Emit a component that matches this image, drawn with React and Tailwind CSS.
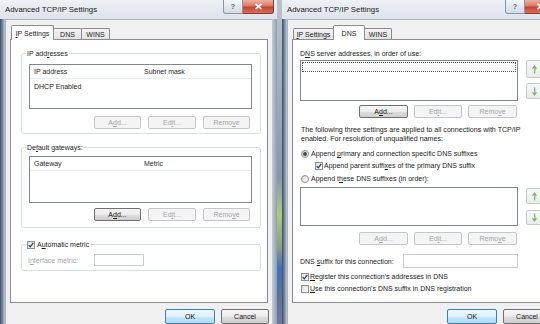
import React from "react";

const FONT = "font-['Liberation_Sans',Arial,sans-serif]";

function U({ children }) {
  return <span className="underline underline-offset-[1px] decoration-[0.7px]">{children}</span>;
}

function Btn({ w, h = "h-[13px]", kind = "disabled", children }) {
  const styles = {
    disabled: "border-[#c3c7cb] bg-[#f4f4f4] text-[#a6a6a6]",
    enabled:
      "border-[#707070] bg-[linear-gradient(to_bottom,#f6f6f6_0%,#ebebeb_50%,#dddddd_51%,#cfcfcf_100%)] text-[#111]",
    default:
      "border-[#3c7fb1] bg-[linear-gradient(to_bottom,#eef7fd_0%,#dcf0fb_50%,#c5e6f8_51%,#b2dbf2_100%)] text-[#111]",
  };
  return (
    <div
      className={`${w} ${h} shrink-0 flex items-center justify-center rounded-[2px] border text-[7px] leading-none ${styles[kind]}`}
    >
      <span>{children}</span>
    </div>
  );
}

function Check({ checked }) {
  return (
    <div className="w-[8px] h-[8px] shrink-0 border border-[#8e8f8f] bg-[linear-gradient(135deg,#dcdcdc,#ffffff)] flex items-center justify-center">
      {checked && (
        <svg width="6" height="6" viewBox="0 0 6 6">
          <path d="M0.7 3.1 L2.3 4.8 L5.3 0.9" stroke="#24365a" strokeWidth="1.2" fill="none" />
        </svg>
      )}
    </div>
  );
}

function Radio({ checked }) {
  return (
    <div className="w-[8px] h-[8px] shrink-0 rounded-full border border-[#8e8f8f] bg-[linear-gradient(135deg,#dcdcdc,#ffffff)] flex items-center justify-center">
      {checked && <div className="w-[4px] h-[4px] rounded-full bg-[#3d4a58]" />}
    </div>
  );
}

function ArrowBtn({ up, h }) {
  return (
    <div
      className={`w-[16px] ${h} shrink-0 rounded-[2px] border border-[#c3c9cf] bg-[linear-gradient(to_bottom,#f7f8f8,#e8ebec)] flex items-center justify-center`}
    >
      <svg width="7" height="9" viewBox="0 0 7 9">
        {up ? (
          <path d="M3.5 8.5 C3.5 6 4.5 4.5 3.5 2 M1.5 3.8 L3.5 1 L5.5 3.8" stroke="#7bb565" strokeWidth="1.2" fill="none" />
        ) : (
          <path d="M3.5 0.5 C3.5 3 4.5 4.5 3.5 7 M1.5 5.2 L3.5 8 L5.5 5.2" stroke="#7bb565" strokeWidth="1.2" fill="none" />
        )}
      </svg>
    </div>
  );
}

function Group({ label, className, children }) {
  return (
    <div className={`relative border border-[#d5dfe5] rounded-[3px] ${className}`}>
      <div className="absolute -top-[5px] left-[4px] bg-white px-[1px] leading-[9px] flex items-center gap-[2px]">
        {label}
      </div>
      {children}
    </div>
  );
}

function ListBox({ h, cols, rows }) {
  return (
    <div className={`w-[223px] ${h} border border-[#828790] bg-white`}>
      <div className="h-[14px] flex items-center border-b border-[#e8ecef] text-[#2a2a2a]">
        <div className="w-[110px] pl-[4px]">{cols[0]}</div>
        <div className="pl-[4px]">{cols[1]}</div>
      </div>
      {rows.map((r, i) => (
        <div key={i} className="h-[14px] flex items-center">
          <div className="w-[110px] pl-[4px]">{r[0]}</div>
          <div className="pl-[4px]">{r[1]}</div>
        </div>
      ))}
    </div>
  );
}

function TitleBar() {
  return (
    <div className="h-[19px] shrink-0 flex items-start bg-[linear-gradient(to_bottom,#eef1f5,#dde3ea)]">
      <div className="flex-1 pl-[5px] pt-[5px] text-[7.8px] leading-[9px] text-[#1a1a1a] whitespace-nowrap">
        Advanced TCP/IP Settings
      </div>
      <div className="w-[20px] h-[14px] shrink-0 border border-t-0 border-[#8795a8] rounded-bl-[3px] bg-[linear-gradient(to_bottom,#f4f7fa,#d3dbe5)] flex items-center justify-center text-[7px] leading-none font-bold text-[#56657a]">
        ?
      </div>
      <div className="w-[31px] h-[14px] shrink-0 mr-[3px] border border-t-0 border-l-0 border-[#8a3a2e] rounded-br-[3px] bg-[linear-gradient(to_bottom,#eeb0a2_0%,#d97a66_45%,#c5432f_55%,#d7705a_100%)] flex items-center justify-center">
        <svg width="9" height="7" viewBox="0 0 9 7">
          <path d="M1.5 0.8 L7.5 6.2 M7.5 0.8 L1.5 6.2" stroke="#ffffff" strokeWidth="1.7" />
        </svg>
      </div>
    </div>
  );
}

function Tabs({ items }) {
  return (
    <div className="h-[14px] shrink-0 flex items-end pl-[1px]">
      {items.map((t, i) =>
        t.sel ? (
          <div
            key={i}
            className={`relative z-10 -mb-px h-[15px] ${t.w} ${i > 0 ? "-ml-px" : ""} border border-b-0 border-[#898c95] rounded-t-[2px] bg-white flex items-center justify-center`}
          >
            {t.label}
          </div>
        ) : (
          <div
            key={i}
            className={`h-[11px] ${t.w} ${i > 0 ? "-ml-px" : ""} border border-b-0 border-[#898c95] rounded-t-[2px] bg-[linear-gradient(to_bottom,#f4f4f4,#e2e2e2)] flex items-center justify-center`}
          >
            {t.label}
          </div>
        )
      )}
    </div>
  );
}

function Window({ tabs, children }) {
  return (
    <div className="w-[277px] h-[324px] shrink-0 flex flex-col">
      <TitleBar />
      <div className="flex flex-1 min-h-0">
        <div className="w-[5px] shrink-0 bg-[linear-gradient(to_right,#3f4e66,#7d8ea6_55%,#c3ccd7)]" />
        <div className="w-[267px] shrink-0 bg-[#f0f0f0] flex flex-col pt-[5px] px-[4px] border-l border-t border-[#aab4c0]">
          <Tabs items={tabs} />
          <div className="h-[264px] shrink-0 border border-[#898c95] bg-white">{children}</div>
          <div className="mt-[6px] flex justify-end gap-[6px] -mr-[1px]">
            <Btn w="w-[50px]" h="h-[15px]" kind="default">OK</Btn>
            <Btn w="w-[48px]" h="h-[15px]" kind="enabled">Cancel</Btn>
          </div>
        </div>
        <div className="w-[5px] shrink-0 bg-[linear-gradient(to_right,#c3ccd7,#8f9db0)]" />
      </div>
    </div>
  );
}

function LeftPanel() {
  return (
    <div className="pl-[10px] pt-[13px] flex flex-col">
      <Group className="w-[240px] h-[81px] pt-[10px] pl-[7px]" label={<span>IP add<U>r</U>esses</span>}>
        <ListBox h="h-[45px]" cols={["IP address", "Subnet mask"]} rows={[["DHCP Enabled", ""]]} />
        <div className="mt-[7px] w-[223px] flex justify-end gap-[7px] pr-[2px]">
          <Btn w="w-[47px]">A<U>d</U>d...</Btn>
          <Btn w="w-[48px]">Ed<U>i</U>t...</Btn>
          <Btn w="w-[47px]">Remo<U>v</U>e</Btn>
        </div>
      </Group>
      <Group className="mt-[13px] w-[240px] h-[81px] pt-[8px] pl-[7px]" label={<span>De<U>f</U>ault gateways:</span>}>
        <ListBox h="h-[47px]" cols={["Gateway", "Metric"]} rows={[]} />
        <div className="mt-[5px] w-[223px] flex justify-end gap-[7px] pr-[2px]">
          <Btn w="w-[47px]" kind="enabled">A<U>d</U>d...</Btn>
          <Btn w="w-[48px]">Ed<U>i</U>t...</Btn>
          <Btn w="w-[47px]">Remo<U>v</U>e</Btn>
        </div>
      </Group>
      <Group
        className="mt-[16px] w-[240px] h-[27px] pt-[9px] pl-[6px]"
        label={
          <>
            <Check checked />
            <span>A<U>u</U>tomatic metric</span>
          </>
        }
      >
        <div className="flex items-center">
          <div className="w-[66px] text-[#a8a8a8]">I<U>n</U>terface metric:</div>
          <div className="w-[50px] h-[12px] border border-[#c9ccd0] bg-white" />
        </div>
      </Group>
    </div>
  );
}

function RightPanel() {
  return (
    <div className="pl-[7px] pt-[9px] flex flex-col leading-[9px]">
      <div>D<U>N</U>S server addresses, in order of use:</div>
      <div className="mt-[2px] flex gap-[8px]">
        <div className="w-[218px] h-[41px] shrink-0 border border-[#828790] bg-white p-[1px]">
          <div className="h-[10px] border border-dotted border-[#5a5a5a]" />
        </div>
        <div className="flex flex-col">
          <ArrowBtn up h="h-[18px]" />
          <div className="mt-[5px]">
            <ArrowBtn h="h-[16px]" />
          </div>
        </div>
      </div>
      <div className="mt-[4px] w-[218px] flex justify-end gap-[6px] pr-[1px]">
        <Btn w="w-[49px]" kind="enabled">A<U>d</U>d...</Btn>
        <Btn w="w-[48px]">Ed<U>i</U>t...</Btn>
        <Btn w="w-[49px]">Remo<U>v</U>e</Btn>
      </div>
      <div className="mt-[8px] pl-[1px] whitespace-nowrap text-[7.1px]">
        The following three settings are applied to all connections with TCP/IP
        <br />
        enabled. For resolution of unqualified names:
      </div>
      <div className="mt-[5px] h-[9px] flex items-center gap-[2px] pl-[1px] whitespace-nowrap">
        <Radio checked />
        <span>Append <U>p</U>rimary and connection specific DNS suffixes</span>
      </div>
      <div className="mt-[3px] h-[9px] flex items-center gap-[1px] pl-[15px] whitespace-nowrap">
        <Check checked />
        <span>Append parent suffi<U>x</U>es of the primary DNS suffix</span>
      </div>
      <div className="mt-[4px] h-[9px] flex items-center gap-[2px] pl-[1px] whitespace-nowrap">
        <Radio />
        <span>Append t<U>h</U>ese DNS suffixes (in order):</span>
      </div>
      <div className="mt-[4px] flex gap-[8px]">
        <div className="w-[218px] h-[39px] shrink-0 border border-[#828790] bg-white" />
        <div className="flex flex-col pt-[1px]">
          <ArrowBtn up h="h-[16px]" />
          <div className="mt-[6px]">
            <ArrowBtn h="h-[15px]" />
          </div>
        </div>
      </div>
      <div className="mt-[6px] w-[218px] flex justify-end gap-[6px] pr-[1px]">
        <Btn w="w-[49px]">A<U>d</U>d...</Btn>
        <Btn w="w-[48px]">Ed<U>i</U>t...</Btn>
        <Btn w="w-[49px]">Remo<U>v</U>e</Btn>
      </div>
      <div className="mt-[9px] h-[14px] flex items-center">
        <div className="w-[103px] whitespace-nowrap">DNS <U>s</U>uffix for this connection:</div>
        <div className="w-[115px] h-[14px] border border-[#c9ccd0] bg-white" />
      </div>
      <div className="mt-[4px] h-[9px] flex items-center gap-[1px] pl-[1px] whitespace-nowrap">
        <Check checked />
        <span><U>R</U>egister this connection's addresses in DNS</span>
      </div>
      <div className="mt-[3px] h-[9px] flex items-center gap-[1px] pl-[1px] whitespace-nowrap">
        <Check />
        <span><U>U</U>se this connection's DNS suffix in DNS registration</span>
      </div>
    </div>
  );
}

export default function App() {
  return (
    <div className={`${FONT} text-[7px] leading-[9px] text-[#1c1c1c] w-[540px] h-[324px] overflow-hidden flex bg-[#6f8197]`}>
      <Window
        tabs={[
          { label: <span><U>I</U>P Settings</span>, w: "w-[43px]", sel: true },
          { label: "DNS", w: "w-[29px]" },
          { label: "WINS", w: "w-[29px]" },
        ]}
      >
        <LeftPanel />
      </Window>
      <div className="w-[5px] h-[324px] shrink-0 bg-[linear-gradient(to_bottom,#b9c3cf_0%,#8796aa_55%,#a8cf78_66%,#8fa07f_76%,#3e70c2_83%,#5a7398_92%,#6a7d96_100%)]" />
      <Window
        tabs={[
          { label: <span><U>I</U>P Settings</span>, w: "w-[41px]" },
          { label: "DNS", w: "w-[32px]", sel: true },
          { label: "WINS", w: "w-[28px]" },
        ]}
      >
        <RightPanel />
      </Window>
    </div>
  );
}
